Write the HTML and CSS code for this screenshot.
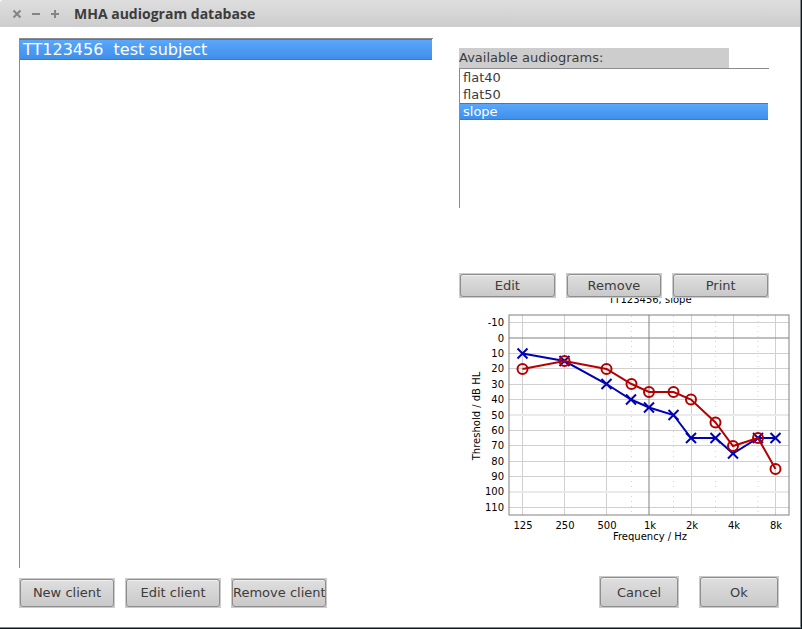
FILE: index.html
```html
<!DOCTYPE html>
<html lang="en">
<head>
<meta charset="utf-8">
<title>MHA audiogram database</title>
<link rel="stylesheet" href="styles.css">
</head>
<body>
<div class="window">
  <header class="titlebar">
    <div class="controls">
      <button type="button" class="control" aria-label="Close"><svg width="10" height="10" viewBox="0 0 10 10"><path d="M1.5 1.5l7 7M8.5 1.5l-7 7"/></svg></button>
      <button type="button" class="control" aria-label="Minimize"><svg width="10" height="10" viewBox="0 0 10 10"><path d="M1 5h8"/></svg></button>
      <button type="button" class="control" aria-label="Maximize"><svg width="10" height="10" viewBox="0 0 10 10"><path d="M1 5h8M5 1v8"/></svg></button>
    </div>
    <h1 class="title">MHA audiogram database</h1>
  </header>
  <main class="content">
    <section class="clients">
      <ul class="list list-clients" role="listbox" aria-label="Clients" tabindex="0">
        <li class="row selected" role="option" aria-selected="true">TT123456&nbsp; test subject</li>
      </ul>
      <div class="actions">
        <button type="button" class="button">New client</button>
        <button type="button" class="button">Edit client</button>
        <button type="button" class="button">Remove client</button>
      </div>
    </section>
    <section class="audiograms">
      <div class="picker">
        <div class="label" id="audiograms-label">Available audiograms:</div>
        <ul class="list list-audiograms" role="listbox" aria-labelledby="audiograms-label" tabindex="0">
          <li class="row" role="option" aria-selected="false">flat40</li>
          <li class="row" role="option" aria-selected="false">flat50</li>
          <li class="row selected" role="option" aria-selected="true">slope</li>
        </ul>
        <div class="tools">
          <button type="button" class="button">Edit</button>
          <button type="button" class="button">Remove</button>
          <button type="button" class="button">Print</button>
        </div>
      </div>
      <svg class="chart" viewBox="0 0 340 250" role="img" aria-label="Audiogram">
        <defs>
          <path id="cross" d="M-5-5L5 5M5-5L-5 5"/>
          <circle id="ring" r="5"/>
        </defs>
        <path class="minor" d="M172.5 18V217M214.5 18V217M256.5 18V217M299 18V217"/>
        <path class="grid" d="M50 24.5H330M50 55.5H330M50 70.5H330M50 86.5H330M50 101.5H330M50 132.5H330M50 147.5H330M50 163.5H330M50 178.5H330M50 209.5H330M63.5 17V217M105.5 17V217M147.5 17V217M232.5 17V217M274.5 17V217M316.5 17V217"/>
        <path class="grid-soft" d="M50 117H330M50 194H330"/>
        <path class="axis" d="M50 40H330M190 17V217"/>
        <rect class="frame" x="50" y="17" width="280" height="200"/>
        <g class="left-ear">
          <polyline points="63.5,55.5 105.5,63 147.5,86 172,101.5 190,109.5 214.5,117 232,140 256.5,140 274,155.5 299,140 316.5,140"/>
          <use href="#cross" x="63.5" y="55.5"/><use href="#cross" x="105.5" y="63"/><use href="#cross" x="147.5" y="86"/><use href="#cross" x="172" y="101.5"/><use href="#cross" x="190" y="109.5"/><use href="#cross" x="214.5" y="117"/><use href="#cross" x="232" y="140"/><use href="#cross" x="256.5" y="140"/><use href="#cross" x="274" y="155.5"/><use href="#cross" x="299" y="140"/><use href="#cross" x="316.5" y="140"/>
        </g>
        <g class="right-ear">
          <polyline points="63.5,71 105.5,63 147.5,71 172.5,86 190,94 214.5,94 232,101.5 256.5,124.5 274,148 299,140 316.5,171"/>
          <use href="#ring" x="63.5" y="71"/><use href="#ring" x="105.5" y="63"/><use href="#ring" x="147.5" y="71"/><use href="#ring" x="172.5" y="86"/><use href="#ring" x="190" y="94"/><use href="#ring" x="214.5" y="94"/><use href="#ring" x="232" y="101.5"/><use href="#ring" x="256.5" y="124.5"/><use href="#ring" x="274" y="148"/><use href="#ring" x="299" y="140"/><use href="#ring" x="316.5" y="171"/>
        </g>
        <g class="y-labels">
          <text x="45" y="28">-10</text><text x="45" y="44">0</text><text x="45" y="59">10</text><text x="45" y="74">20</text><text x="45" y="90">30</text><text x="45" y="105">40</text><text x="45" y="121">50</text><text x="45" y="136">60</text><text x="45" y="151">70</text><text x="45" y="167">80</text><text x="45" y="182">90</text><text x="45" y="197">100</text><text x="45" y="213">110</text>
        </g>
        <g class="x-labels">
          <text x="191" y="5">TT123456, slope</text>
          <text x="64" y="231">125</text><text x="106" y="231">250</text><text x="148" y="231">500</text><text x="191" y="231">1k</text><text x="233" y="231">2k</text><text x="275" y="231">4k</text><text x="317" y="231">8k</text>
          <text x="191" y="242">Frequency / Hz</text>
          <text transform="translate(21 118) rotate(-90)">Threshold / dB HL</text>
        </g>
      </svg>
      <div class="dialog-actions">
        <button type="button" class="button">Cancel</button>
        <button type="button" class="button">Ok</button>
      </div>
    </section>
  </main>
</div>
</body>
</html>
```
FILE: styles.css
```css
* {
  box-sizing: border-box;
}

body {
  margin: 0;
  background: #0b1a22;
  color: #3c3c3c;
  font: 13px/17px "DejaVu Sans", sans-serif;
}

.window {
  display: flex;
  flex-direction: column;
  min-height: calc(100vh - 1px);
  margin: 0 1px 1px 0;
  background: #fff;
  border: solid #85888a;
  border-width: 0 1px 1px 0;
}

.titlebar {
  display: flex;
  align-items: center;
  gap: 14px;
  height: 27px;
  padding: 0 12px;
  background: linear-gradient(#dedede, #cdcdcd);
  border-radius: 3px 0 0;
}

.controls {
  display: flex;
  gap: 9px;
}

.control {
  display: flex;
  width: 10px;
  height: 10px;
  padding: 0;
  background: none;
  border: 0;
}

.control svg {
  fill: none;
  stroke: #858585;
  stroke-width: 2;
}

.title {
  margin: 0;
  font: bold 14px/20px "Open Sans", "Noto Sans", sans-serif;
}

.content {
  display: grid;
  flex: 1;
  grid-template-columns: 414fr 341fr;
  column-gap: 26px;
  padding: 11px 0 19px 19px;
}

.clients,
.audiograms {
  display: flex;
  flex-direction: column;
  min-width: 0;
}

.list {
  margin: 0;
  padding: 0 1px 0 0;
  list-style: none;
  border: solid #8c8c8c;
  border-width: 1px 0 0 1px;
}

.list-clients {
  flex: 1;
  font-size: 16px;
  line-height: 19px;
}

.list-audiograms {
  height: 140px;
}

.row {
  padding: 0 3px;
}

.selected {
  color: #fff;
  background: linear-gradient(#5aa7fb, #3f8fea);
  border: solid #2f7fd8;
  border-width: 1px 0;
}

.list-audiograms .selected {
  line-height: 15px;
}

/* Buttons: a bevelled face on a flat grey plate */
.button {
  position: relative;
  padding: 0;
  color: #3c3c3c;
  font: inherit;
  white-space: nowrap;
  background: linear-gradient(#dfdfdf, #c9c9c9) padding-box, #cacaca;
  border: 2px solid #cacaca;
}

.button::before {
  position: absolute;
  inset: -1px;
  content: "";
  border: 1px solid #8e8e8e;
  border-radius: 3px;
  box-shadow: inset 0 1px #efefef;
}

.actions {
  display: flex;
  gap: 10px;
  margin-top: 10px;
}

.actions .button {
  width: 96px;
  height: 30px;
  padding-bottom: 2px;
}

.picker {
  margin-right: 31px;
  padding-top: 10px;
}

.label {
  max-width: 270px;
  height: 20px;
  line-height: 20px;
  background: #cdcdcd;
}

.tools {
  display: grid;
  grid-template-columns: repeat(3, 1fr);
  gap: 10px;
  margin-top: 65px;
}

.tools .button {
  height: 25px;
}

.chart {
  display: block;
  width: 100%;
  max-width: 340px;
  overflow: hidden;
}

.minor,
.grid,
.grid-soft,
.axis,
.frame,
.left-ear,
.right-ear {
  fill: none;
}

.minor {
  stroke: #d4d4d4;
  stroke-dasharray: 1 4;
}

.grid {
  stroke: #d0d0d0;
}

.grid-soft {
  stroke: #eaeaea;
  stroke-width: 2;
}

.axis,
.frame {
  stroke: #808080;
}

.left-ear {
  stroke: #0000b4;
  stroke-width: 2;
}

.right-ear {
  stroke: #b40000;
  stroke-width: 2;
}

.y-labels,
.x-labels {
  fill: #000;
  font-size: 10px;
}

.y-labels {
  text-anchor: end;
}

.x-labels {
  text-anchor: middle;
}

.dialog-actions {
  display: flex;
  justify-content: flex-end;
  gap: 20px;
  margin: auto 21px 0 0;
}

.dialog-actions .button {
  width: 80px;
  height: 32px;
}
```
